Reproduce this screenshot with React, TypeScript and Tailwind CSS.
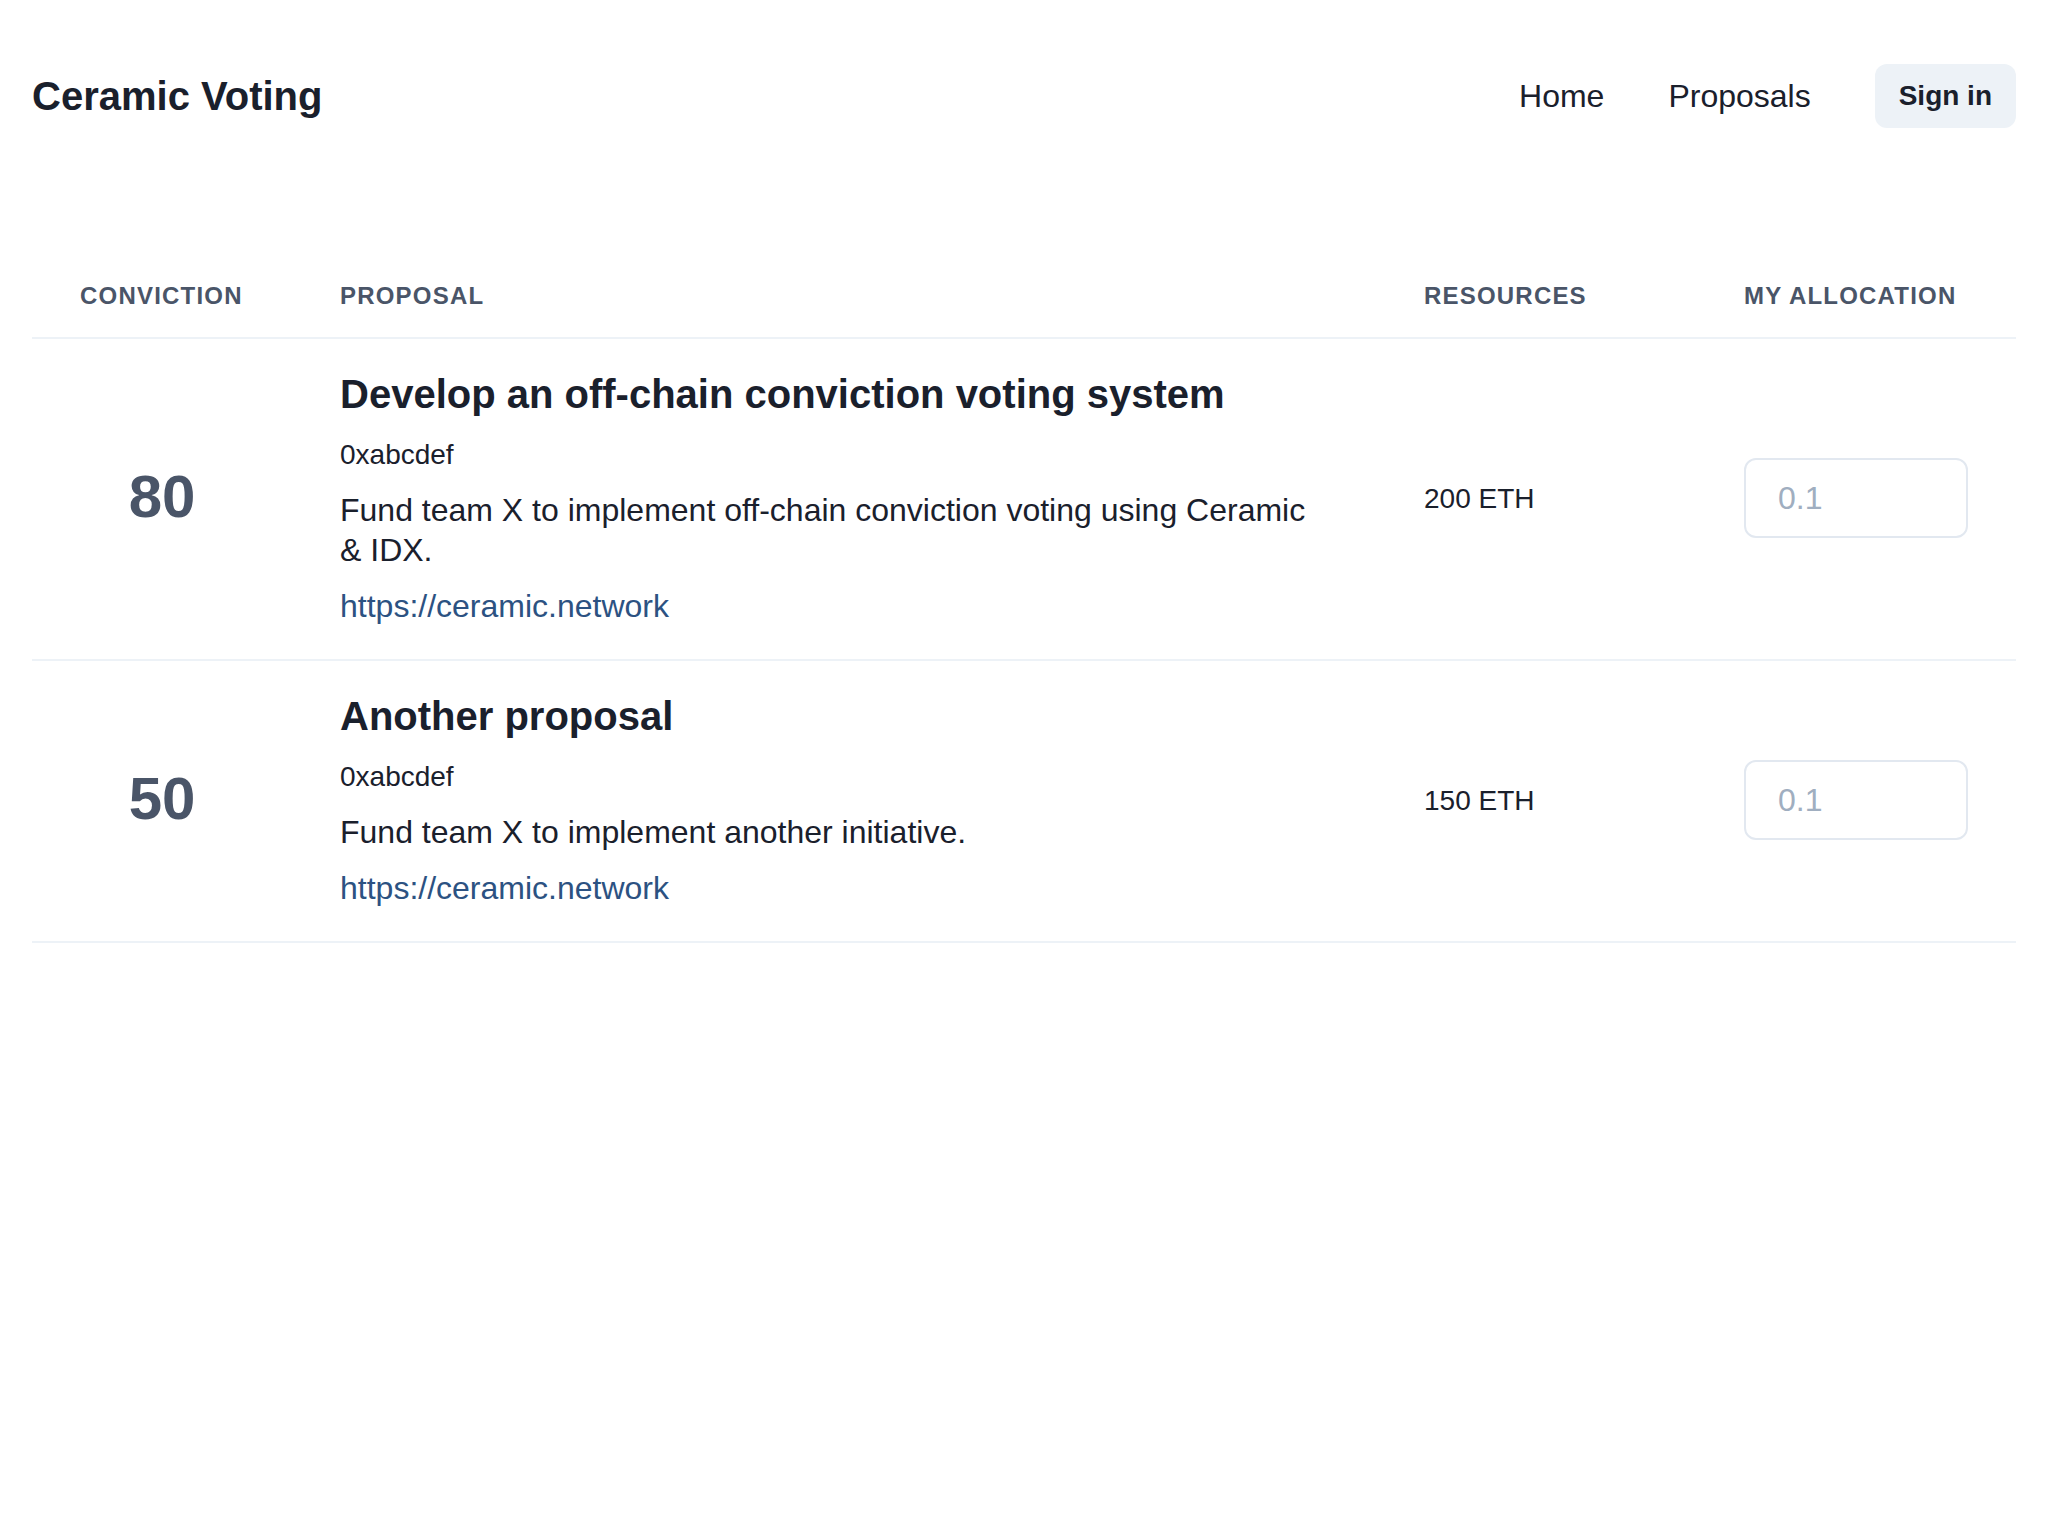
const proposals = [
  {
    conviction: 80,
    title: "Develop an off-chain conviction voting system",
    author: "0xabcdef",
    description: "Fund team X to implement off-chain conviction voting using Ceramic & IDX.",
    url: "https://ceramic.network",
    resources: "200 ETH",
  },
  {
    conviction: 50,
    title: "Another proposal",
    author: "0xabcdef",
    description: "Fund team X to implement another initiative.",
    url: "https://ceramic.network",
    resources: "150 ETH",
  },
];

const cols = "grid grid-cols-[260px_1fr_320px_320px]";

function Header() {
  return (
    <header className="flex items-center justify-between pt-16">
      <h1 className="text-[40px] font-bold leading-[48px] text-[#1a202c]">Ceramic Voting</h1>
      <nav className="flex items-center gap-16">
        <a href="#" className="text-[32px] leading-[40px] text-[#1a202c]">Home</a>
        <a href="#" className="text-[32px] leading-[40px] text-[#1a202c]">Proposals</a>
        <button className="h-16 rounded-xl bg-[#edf2f7] px-6 text-[28px] font-bold text-[#1a202c]">Sign in</button>
      </nav>
    </header>
  );
}

function Th({ children }: { children: React.ReactNode }) {
  return (
    <div className="px-12 pt-[23px] pb-[25px] text-[24px] font-bold uppercase leading-8 tracking-[0.05em] text-[#4a5568]">
      {children}
    </div>
  );
}

function Row({ p }: { p: (typeof proposals)[number] }) {
  return (
    <div className={`${cols} border-b-2 border-[#edf2f7]`}>
      <div className="flex items-center justify-center px-12 pt-8 pb-[37px]">
        <span className="text-[60px] font-bold leading-none text-[#4a5568]">{p.conviction}</span>
      </div>
      <div className="flex flex-col px-12 pt-[31px] pb-8">
        <h2 className="text-[40px] font-bold leading-[48px] text-[#1a202c]">{p.title}</h2>
        <p className="mt-[17px] text-[28px] leading-[40px] text-[#1a202c]">{p.author}</p>
        <p className="mt-[15px] text-[32px] leading-[40px] text-[#1a202c]">{p.description}</p>
        <a href={p.url} className="mt-[15px] text-[32px] leading-[42px] text-[#2c5282]">
          {p.url}
        </a>
      </div>
      <div className="flex items-center px-12 py-8 text-[28px] text-[#1a202c]">{p.resources}</div>
      <div className="flex items-center px-12 pt-8 pb-[34px]">
        <input
          placeholder="0.1"
          className="h-20 w-full rounded-xl border-2 border-[#e2e8f0] px-8 text-[32px] text-[#1a202c] placeholder:text-[#a0aec0] outline-none"
        />
      </div>
    </div>
  );
}

export default function App() {
  return (
    <div className="min-h-screen bg-white px-8 font-['Liberation_Sans',Arial,sans-serif]">
      <Header />
      <main className="mt-[129px]">
        <div className={`${cols} border-b-2 border-[#edf2f7]`}>
          <Th>Conviction</Th>
          <Th>Proposal</Th>
          <Th>Resources</Th>
          <Th>My allocation</Th>
        </div>
        {proposals.map((p, i) => (
          <Row key={i} p={p} />
        ))}
      </main>
    </div>
  );
}
